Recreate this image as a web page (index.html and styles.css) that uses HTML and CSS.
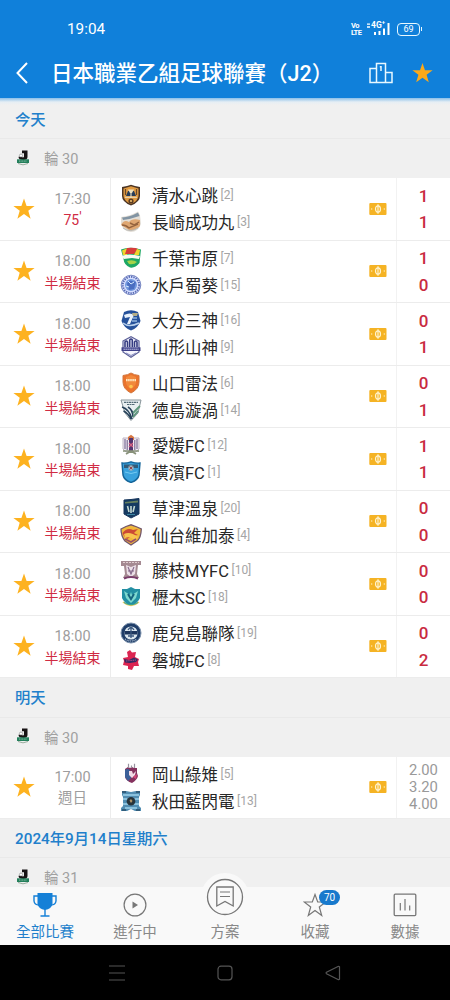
FILE: index.html
```html
<!doctype html>
<html lang="zh-Hant">
  <head>
    <meta charset="UTF-8" />
    <meta name="viewport" content="width=device-width, initial-scale=1.0" />
    <title>日本職業乙組足球聯賽（J2）</title>
    <link rel="stylesheet" href="styles.css">
  </head>
  <body>
    <!-- Shared icons -->
    <svg class="sprite" aria-hidden="true">
      <symbol id="star" viewBox="0 0 22 22">
        <path d="M11 .4 13.6 8H21.6L15.3 12.8 17.6 20.7 11 16 4.4 20.7 6.7 12.8.4 8H8.4Z" />
      </symbol>
      <symbol id="cash" viewBox="0 0 18 12">
        <rect x="0.3" width="17.2" height="12" rx="1" fill="#f5b324" />
        <ellipse cx="9" cy="6" rx="2.5" ry="3.2" fill="none" stroke="#fff3cf" stroke-width="1.2" />
        <path d="M9 1.3v9.4M2 6h1.3M14.7 6H16" stroke="#fff3cf" stroke-width="1.2" />
      </symbol>
      <symbol id="jleague" viewBox="0 0 14 16">
        <path d="M6 .5H11.5V7Q11.5 10 7.5 10 2.5 10 2.5 6.8H5.5Q7.5 8.5 8 6.5V3.2H6Z" fill="#171314" />
        <circle cx="5" cy="5.6" r="1.6" fill="#fff" stroke="#444" stroke-width=".4" />
        <path d="M1 9.3H13V13H1Z" fill="#24805c" />
        <path d="M3 11.1H11" stroke="#a6cdb9" stroke-width=".8" stroke-dasharray="1 .6" />
        <path d="M2 13.5Q7 16.2 12 13.5" stroke="#9aae9f" fill="none" />
      </symbol>
    </svg>

    <div class="screen">
      <div class="status-bar">
        <span class="clock">19:04</span>
        <span class="volte">Vo<br>LTE</span>
        <span class="signal">
          <span class="signal-type">4G<sup>+</sup></span>
          <svg width="24" height="14" viewBox="0 0 24 14">
            <path d="M1 2.2H4M1 5H4" stroke="#fff" stroke-width="1.3" />
            <path d="M9 10v3M13.5 9v4M18 6.5V13M22.5 1v12" stroke="#fff" stroke-width="2" />
          </svg>
        </span>
        <span class="battery">69</span>
      </div>

      <div class="header">
        <svg class="back" width="14" height="24" viewBox="0 0 14 24">
          <path d="M12 2 2.5 12 12 22" fill="none" stroke="#fff" stroke-width="2" />
        </svg>
        <h1>日本職業乙組足球聯賽（J2）</h1>
        <svg class="podium" width="24" height="22" viewBox="0 0 24 22">
          <path d="M7.5 20.5V1.5H16.5V20.5M7.5 6.5H1V20.5H23V10.5H16.5M10.8 4.8H12V9" fill="none" stroke="#e8f8ff" stroke-width="1.5" />
        </svg>
        <svg class="header-star"><use href="#star" /></svg>
      </div>

      <div class="list">
        <h2 class="day">今天</h2>
        <div class="round"><svg class="league"><use href="#jleague" /></svg>輪 30</div>

        <div class="match">
          <svg class="fav"><use href="#star" /></svg>
          <div class="when"><span>17:30</span><span class="live">75<i>'</i></span></div>
          <div class="teams">
            <div class="team">
              <svg class="crest" viewBox="0 0 22 22">
                <path d="M2 3 7 2 11 .8 15 2 20 3V12Q20 18 11 21.5 2 18 2 12Z" fill="#4b3424" />
                <path d="M3.5 4.5 11 2.3 18.5 4.5V12Q18 17 11 20 4 17 3.5 12Z" fill="#e09a41" />
                <path d="M6 12 8 7H14L16 12Z" fill="#273d59" />
                <path d="M8 5.5H14L12 9H10Z" fill="#efe2bf" />
                <path d="M5 13.2H17M11 9V14" stroke="#eee3c6" stroke-width="1.1" />
                <path d="M5.5 5V11M16.5 5V11" stroke="#6b4a2b" stroke-width="1.2" />
                <circle cx="11" cy="17" r="2.6" fill="#5a3b21" />
                <circle cx="11" cy="17" r="1.1" fill="#e9bb6d" />
              </svg>
              清水心跳<small>[2]</small>
            </div>
            <div class="team">
              <svg class="crest" viewBox="0 0 22 22">
                <path d="M1 6Q10 5 18 .5L20 4 21 13Q18 21 11 21 3 20 1 13Z" fill="#e3ded6" />
                <path d="M2 6.5Q10 6 18 1.5L19.5 5Q11 8 3 9Z" fill="#8294a3" />
                <path d="M1 14Q4 8 9 11 12 7 20 9L20 15Q16 20 9 19Z" fill="#dfa772" />
                <path d="M2 14Q6 14 9 17L18 13M10 12 14 14 19 11" stroke="#96643f" fill="none" stroke-width="1.4" />
                <path d="M3 17Q10 22 18 17" fill="none" stroke="#b9b9b5" />
              </svg>
              長崎成功丸<small>[3]</small>
            </div>
          </div>
          <svg class="cash"><use href="#cash" /></svg>
          <div class="score"><b>1</b><b>1</b></div>
        </div>

        <div class="match">
          <svg class="fav"><use href="#star" /></svg>
          <div class="when"><span>18:00</span><span class="live">半場結束</span></div>
          <div class="teams">
            <div class="team">
              <svg class="crest" viewBox="0 0 22 22">
                <path d="M1 2.5Q10-1 21 2.5L19.5 16Q15 21.5 10 20.5 4 18 3.5 12Z" fill="#1da765" />
                <path d="M2 3.5Q6 1 10 1L7 8 3 8Z" fill="#f0d22d" />
                <path d="M7 1Q15 0 18 2L14 7 5 7Z" fill="#d73c3b" />
                <path d="M17 2 20 3 19 8H14Z" fill="#efd42c" />
                <path d="M1 9Q9 6 20 9L19 12 12 11 4 12Z" fill="#f8faf1" />
                <path d="M7 14Q13 12 17 15 14 18 9 17Z" fill="#a6d349" />
              </svg>
              千葉市原<small>[7]</small>
            </div>
            <div class="team">
              <svg class="crest" viewBox="0 0 22 22">
                <circle cx="11" cy="11" r="9.8" fill="#d8e0ff" stroke="#7c8bc4" stroke-width="1" />
                <circle cx="11" cy="11" r="8.2" fill="none" stroke="#5a6cb4" stroke-width="2" stroke-dasharray="1.4 1" />
                <circle cx="11" cy="11" r="6" fill="#7399df" />
                <path d="M7 10Q9 5 12 7L16 8 14 15 9 16Z" fill="#4a6ec2" />
                <path d="M8 7 11 10 14 8M6 12 9 13" stroke="#d6ebff" fill="none" />
              </svg>
              水戶蜀葵<small>[15]</small>
            </div>
          </div>
          <svg class="cash"><use href="#cash" /></svg>
          <div class="score"><b>1</b><b>0</b></div>
        </div>

        <div class="match">
          <svg class="fav"><use href="#star" /></svg>
          <div class="when"><span>18:00</span><span class="live">半場結束</span></div>
          <div class="teams">
            <div class="team">
              <svg class="crest" viewBox="0 0 22 22">
                <path d="M4 3Q11-.5 18 3L20.5 12Q18 19 11 21.5 4 19 1.5 12Z" fill="#25519a" />
                <path d="M4 6Q10 3 14 6L10 15H7L10 8 5 9Z" fill="#e9f2fb" />
                <path d="M12 4H18L17 7H13Z" fill="#b5ae85" />
                <path d="M13 9H17M12 12H17" stroke="#8fb2dd" stroke-width="1.3" />
                <path d="M3 14Q9 19 19 14" stroke="#b8d0eb" stroke-width="1.6" fill="none" />
              </svg>
              大分三神<small>[16]</small>
            </div>
            <div class="team">
              <svg class="crest" viewBox="0 0 22 22">
                <path d="M3 5 11 .8 19 5V16L11 21.3 3 16Z" fill="#f5f5fe" stroke="#5c6098" stroke-width="1.2" />
                <path d="M5 11V6Q6.5 4 7.5 6V11M9.7 11V4Q11 2 12.3 4V11M14.5 11V6Q16 4 17 6V11" fill="none" stroke="#353b81" stroke-width="1.6" />
                <path d="M1.5 11.3H20.5V15H1.5Z" fill="#3e4089" />
                <path d="M3.5 13.2H18.5" stroke="#dfdffa" stroke-dasharray="1.3 .7" />
                <path d="M6 17 11 19.5 16 17" stroke="#8087bb" fill="none" />
              </svg>
              山形山神<small>[9]</small>
            </div>
          </div>
          <svg class="cash"><use href="#cash" /></svg>
          <div class="score"><b>0</b><b>1</b></div>
        </div>

        <div class="match">
          <svg class="fav"><use href="#star" /></svg>
          <div class="when"><span>18:00</span><span class="live">半場結束</span></div>
          <div class="teams">
            <div class="team">
              <svg class="crest" viewBox="0 0 22 22">
                <path d="M3 3.5Q8 3 11 1 14 3 19 3.5V10Q19 17 11 21 3 17 3 10Z" fill="#eb732c" stroke="#d1763d" />
                <path d="M6 5 11 3 16 5V11Q15 15 11 17 7 15 6 11Z" fill="#f1893c" />
                <path d="M6 8.2H16" stroke="#ffe5bd" stroke-width="2.2" stroke-dasharray="1.6 .5" />
                <circle cx="11" cy="14.5" r="1.8" fill="#ffc54f" />
              </svg>
              山口雷法<small>[6]</small>
            </div>
            <div class="team">
              <svg class="crest" viewBox="0 0 22 22">
                <path d="M1 1H21L18 14 11 21.5 5 14Z" fill="#e7eef0" stroke="#88959b" />
                <path d="M4 3.3H18M7 5.5H15" stroke="#526a77" stroke-width="1.2" stroke-dasharray="2 .5" />
                <path d="M2 8Q9 10 12 20M3.5 12Q8 14 11 20M8 8Q13 11 13 18" fill="none" stroke="#27425a" stroke-width="1.6" />
                <path d="M13 14 20 7M13 18 18 12" stroke="#5d967a" stroke-width="1.8" />
              </svg>
              德島漩渦<small>[14]</small>
            </div>
          </div>
          <svg class="cash"><use href="#cash" /></svg>
          <div class="score"><b>0</b><b>1</b></div>
        </div>

        <div class="match">
          <svg class="fav"><use href="#star" /></svg>
          <div class="when"><span>18:00</span><span class="live">半場結束</span></div>
          <div class="teams">
            <div class="team">
              <svg class="crest" viewBox="0 0 22 22">
                <path d="M3 4H19V15L16 18H6L3 15Z" fill="#eee8f3" stroke="#bdb5c4" />
                <path d="M8 3 11 .7 14 3V6H8Z" fill="#d77743" />
                <path d="M9 4H13V17H9Z" fill="#52346f" />
                <path d="M5 5V15M17 5V15M7.2 6V16M14.8 6V16" stroke="#71628b" stroke-width="1.1" />
                <path d="M9 9 13 13M13 9 9 13" stroke="#d56384" stroke-width="1.3" />
                <path d="M3 17H19M6 20 11 17 16 20" stroke="#88927a" stroke-width="1.7" fill="none" />
              </svg>
              愛媛FC<small>[12]</small>
            </div>
            <div class="team">
              <svg class="crest" viewBox="0 0 22 22">
                <path d="M2 2Q6 2.5 11 .8 16 2.5 20 2L19 14Q18 19 11 21.5 4 19 3 14Z" fill="#39a2dd" stroke="#14659a" stroke-width="1.4" />
                <path d="M4 3.5H18V7H4Z" fill="#315c7a" />
                <circle cx="11" cy="7" r="2.7" fill="#9fb4c0" />
                <path d="M9.5 5.5 12.5 8.5M12.5 5.5 9.5 8.5" stroke="#94484f" />
                <path d="M5 11Q11 14 17 11" fill="none" stroke="#74caf2" />
              </svg>
              橫濱FC<small>[1]</small>
            </div>
          </div>
          <svg class="cash"><use href="#cash" /></svg>
          <div class="score"><b>1</b><b>1</b></div>
        </div>

        <div class="match">
          <svg class="fav"><use href="#star" /></svg>
          <div class="when"><span>18:00</span><span class="live">半場結束</span></div>
          <div class="teams">
            <div class="team">
              <svg class="crest" viewBox="0 0 22 22">
                <path d="M4 3 11 2.5 19 1.5V17L11 21 4 17Z" fill="#153a61" stroke="#16355c" />
                <path d="M5 5 18 3.5V5.5L5 6.5Z" fill="#66805f" />
                <path d="M7.5 9 9 15M11 9V16M14.5 9 13 15" fill="none" stroke="#c4d9d2" stroke-width="1.6" />
                <path d="M7 17.5H15" stroke="#3b83a1" />
              </svg>
              草津溫泉<small>[20]</small>
            </div>
            <div class="team">
              <svg class="crest" viewBox="0 0 22 22">
                <path d="M1 5 6 2.5 11 .8 17 3 21.3 5Q21 14 17 17L11 21 5 17Q1 12 1 5Z" fill="#f0b83b" stroke="#72566b" stroke-width="1.3" />
                <path d="M2.5 9Q7 3 13 6L18 5 14 9 18 11 12 12 7 15 4 12Z" fill="#cb4935" />
                <path d="M4 10Q10 7 18 13L15 16Q10 12 5 14Z" fill="#f8c450" />
                <path d="M5 15 11 18 16 15" fill="none" stroke="#974e68" stroke-width="1.6" />
              </svg>
              仙台維加泰<small>[4]</small>
            </div>
          </div>
          <svg class="cash"><use href="#cash" /></svg>
          <div class="score"><b>0</b><b>0</b></div>
        </div>

        <div class="match">
          <svg class="fav"><use href="#star" /></svg>
          <div class="when"><span>18:00</span><span class="live">半場結束</span></div>
          <div class="teams">
            <div class="team">
              <svg class="crest" viewBox="0 0 22 22">
                <path d="M1 2H21V6H18L17 15 19 19H3L5 15 4 7H1Z" fill="#a58a92" />
                <path d="M3 3.5H19" stroke="#e0cdd0" stroke-width="1.2" stroke-dasharray="2 1" />
                <path d="M6 6 11 8 16 6 15 15 11 18 7 15Z" fill="#ece0e8" />
                <path d="M8 8 11 15 14 8M8 12H14" fill="none" stroke="#85688a" stroke-width="1.1" />
                <path d="M4 19.5Q11 16.5 18 19.5" stroke="#793d6b" stroke-width="2" fill="none" />
              </svg>
              藤枝MYFC<small>[10]</small>
            </div>
            <div class="team">
              <svg class="crest" viewBox="0 0 22 22">
                <path d="M2 3 7 3 11 1 15 3 20 3V12Q18 17 11 20 4 17 2 12Z" fill="#238fa3" />
                <path d="M4 5 10 9 11 6 12 9 18 5 16 12 11 17 6 12Z" fill="#7ed9cf" />
                <path d="M8 8 11 13 14 8" stroke="#16647f" stroke-width="2" fill="none" />
                <path d="M3 16Q11 23 19 16" fill="none" stroke="#e3ca62" stroke-width="1.6" />
                <path d="M4 16.5Q11 21 18 16.5" fill="none" stroke="#36a391" />
              </svg>
              櫪木SC<small>[18]</small>
            </div>
          </div>
          <svg class="cash"><use href="#cash" /></svg>
          <div class="score"><b>0</b><b>0</b></div>
        </div>

        <div class="match">
          <svg class="fav"><use href="#star" /></svg>
          <div class="when"><span>18:00</span><span class="live">半場結束</span></div>
          <div class="teams">
            <div class="team">
              <svg class="crest" viewBox="0 0 22 22">
                <circle cx="11" cy="11" r="10" fill="#203e69" stroke="#7b91ac" />
                <circle cx="11" cy="11" r="6.6" fill="#dce7ee" />
                <path d="M4.5 9H17.5V12.5H4.5Z" fill="#1d365d" />
                <path d="M8 8Q11 3 14 8M11 6V16M8 14H14" fill="none" stroke="#38567d" stroke-width="1.3" />
                <path d="M5 17Q11 21 17 17" fill="none" stroke="#b8c7da" stroke-width="1.2" stroke-dasharray="1 .8" />
              </svg>
              鹿兒島聯隊<small>[19]</small>
            </div>
            <div class="team">
              <svg class="crest" viewBox="0 0 22 22">
                <path d="M7 3 10 1 12 3.5 16 3 15 8 19 10 18 13 19 17 14 17 12 21 8 20 8 17 3 16 4 12 3 9 8 8Z" fill="#dc2451" />
                <path d="M4 10 9 11 14 8.5 18 10.5 16 13 10 14 5 13.5Z" fill="#342b65" />
                <path d="M6 12 16 11" stroke="#a95083" stroke-width="1" stroke-dasharray="1.5 .7" />
              </svg>
              磐城FC<small>[8]</small>
            </div>
          </div>
          <svg class="cash"><use href="#cash" /></svg>
          <div class="score"><b>0</b><b>2</b></div>
        </div>

        <h2 class="day">明天</h2>
        <div class="round"><svg class="league"><use href="#jleague" /></svg>輪 30</div>

        <div class="match upcoming">
          <svg class="fav"><use href="#star" /></svg>
          <div class="when"><span>17:00</span><span>週日</span></div>
          <div class="teams">
            <div class="team">
              <svg class="crest" viewBox="0 0 22 22">
                <path d="M5 6 8 4 10 5 12 4 14 5 17 5 17 10 18 13Q17 17 12 20 6 18 5 14Z" fill="#85325e" />
                <path d="M5 7Q7 5 10 7L11 15 8 18 5 14Z" fill="#3b6099" />
                <path d="M9 8H12L13 11 16 8 15 12 12 15 9 12Z" fill="#f2dbe6" />
                <path d="M8.5 .8V5M14.5 .8V5M11.5 2.5V5" stroke="#98939f" stroke-width="1.2" />
                <path d="M13 14 17 11 16 16Z" fill="#d54779" />
              </svg>
              岡山綠雉<small>[5]</small>
            </div>
            <div class="team">
              <svg class="crest" viewBox="0 0 22 22">
                <path d="M2 1H6L11 2 16 1H20V5L19 7V16L21 18V21H15L11 19 7 21H1V18L3 16V7L2 5Z" fill="#518db2" />
                <path d="M3 5H19M3 9H19M3 14H19M5 18H17" stroke="#9dd2ec" stroke-width="1.4" />
                <circle cx="11" cy="11.2" r="4.3" fill="#27343c" />
                <path d="M9.5 10.5 11 9 12.5 11 11 13Z" fill="#b39569" />
                <path d="M2 2H6M20 2H16M2 20H6M20 20H16" stroke="#284e6a" stroke-width="1.5" />
              </svg>
              秋田藍閃電<small>[13]</small>
            </div>
          </div>
          <svg class="cash"><use href="#cash" /></svg>
          <div class="odds"><span>2.00</span><span>3.20</span><span>4.00</span></div>
        </div>

        <h2 class="day">2024年9月14日星期六</h2>
        <div class="round"><svg class="league"><use href="#jleague" /></svg>輪 31</div>
      </div>

      <div class="tabs">
        <div class="tab active">
          <svg width="24" height="26" viewBox="0 0 24 26">
            <path d="M4.5 1H19.5V12Q18.5 17 12 18 5.5 17 4.5 12Z" fill="#1580d7" />
            <path d="M5 4H1V9Q1.5 13 6 13M19 4H23V9Q22.5 13 18 13M12 17V23.5M7.5 24H16.5" fill="none" stroke="#1580d7" stroke-width="1.4" />
          </svg>
          <span>全部比賽</span>
        </div>
        <div class="tab">
          <svg width="24" height="26" viewBox="0 0 24 26">
            <circle cx="12" cy="13" r="10.9" fill="none" stroke="#777" stroke-width="1.2" />
            <path d="M9.5 9.5 15 13 9.5 16.5Z" fill="#777" />
          </svg>
          <span>進行中</span>
        </div>
        <div class="tab tab-plan">
          <svg width="48" height="48" viewBox="0 0 48 48">
            <circle cx="24" cy="24" r="24" fill="#f9f9f9" />
            <circle cx="24" cy="24" r="17.5" fill="none" stroke="#777" stroke-width="1.3" />
            <path d="M15.8 14H32.2V33L24 28.5 15.8 33Z" fill="none" stroke="#777" stroke-width="1.3" />
            <path d="M19 19H29M19 23.5H29" stroke="#777" stroke-width="1.2" />
          </svg>
          <span>方案</span>
        </div>
        <div class="tab">
          <svg width="24" height="26" viewBox="0 0 24 26">
            <path d="M12 2.5 14.7 10H22.8L16.3 15 18.7 23.5 12 18.6 5.3 23.5 7.7 15 1.2 10H9.3Z" fill="none" stroke="#777" stroke-width="1.2" />
          </svg>
          <span>收藏</span>
          <em class="badge">70</em>
        </div>
        <div class="tab">
          <svg width="24" height="26" viewBox="0 0 24 26">
            <rect x="1.2" y="2.2" width="21.6" height="21.4" rx="1" fill="none" stroke="#777" stroke-width="1.3" />
            <path d="M7.3 11V18.5M12 7V18.5M16.7 13.5V18.5" stroke="#777" stroke-width="1.2" />
          </svg>
          <span>數據</span>
        </div>
      </div>

      <div class="system-nav">
        <svg width="16" height="16" viewBox="0 0 16 16"><path d="M0 1H16M0 8H16M0 15H16" stroke="#555" stroke-width="1.2" /></svg>
        <svg width="16" height="16" viewBox="0 0 16 16"><rect x="1" y="1.2" width="14" height="13.6" rx="3" fill="none" stroke="#555" stroke-width="1.2" /></svg>
        <svg width="16" height="16" viewBox="0 0 16 16"><path d="M14.5 1.8V14.2Q14 15 13 14.5L1.5 8.7Q.7 8 1.5 7.3L13 1.5Q14 1 14.5 1.8Z" fill="none" stroke="#555" stroke-width="1.2" /></svg>
      </div>
    </div>
  </body>
</html>
```

FILE: styles.css
```css
* {
  margin: 0;
  padding: 0;
  box-sizing: border-box;
}

body {
  font-family: Roboto, "Noto Sans CJK TC", sans-serif;
  background: #f0f0f0;
}

svg {
  display: block;
  flex: none;
}

.sprite {
  width: 0;
  height: 0;
  position: absolute;
}

.screen {
  width: 450px;
  height: 1000px;
  display: flex;
  flex-direction: column;
  overflow: hidden;
}

.status-bar {
  height: 48px;
  padding: 10px 30px 0 67px;
  display: flex;
  align-items: center;
  flex: none;
  background: #1080da;
  color: #fff;
}

.clock {
  flex: 1;
  font-size: 15.3px;
}

.volte {
  width: 11px;
  margin-right: 4px;
  font-size: 7.5px;
  line-height: 7px;
  font-weight: 700;
  letter-spacing: -0.6px;
}

.signal {
  position: relative;
  margin-right: 7px;
}

.signal-type {
  position: absolute;
  top: -2px;
  left: 5px;
  font-size: 8.5px;
  line-height: 10px;
  font-weight: 700;
  white-space: nowrap;
}

.signal-type sup {
  font-size: 6px;
  line-height: 0;
}

.battery {
  position: relative;
  width: 23px;
  height: 13px;
  border: 1.5px solid #e8f8ff;
  border-radius: 4px;
  font-size: 9px;
  line-height: 11px;
  text-align: center;
}

.battery::after {
  content: "";
  position: absolute;
  top: 3px;
  right: -3px;
  width: 1.5px;
  height: 4px;
  background: #e8f8ff;
}

.header {
  height: 50px;
  padding: 0 17px 0 15px;
  display: flex;
  align-items: center;
  flex: none;
  background: #1080da;
  color: #fff;
}

.header h1 {
  flex: 1;
  margin-left: 22px;
  padding-top: 1px;
  font-size: 21.5px;
  line-height: 30px;
  font-weight: 500;
  white-space: nowrap;
}

.podium {
  margin-right: 19px;
}

.header-star {
  width: 21px;
  height: 22px;
  fill: #fca918;
}

.list {
  flex: 1;
  min-height: 0;
  padding-top: 1.5px;
  overflow: hidden;
  background: linear-gradient(#8abfe9, #e6eef4 4px, #f0f0f0 7px);
}

.day {
  height: 39.5px;
  padding-left: 15px;
  border-bottom: 1px solid #e9e9e9;
  font-size: 15.3px;
  line-height: 41px;
  font-weight: 500;
  color: #217fcb;
}

.round {
  height: 39px;
  padding: 0 0 2px 16px;
  display: flex;
  align-items: center;
  font-size: 14.5px;
  color: #a0a0a0;
}

.league {
  width: 14px;
  height: 16px;
  margin-right: 14px;
}

.match {
  height: 62.5px;
  display: flex;
  align-items: center;
  background: #fff;
  border-bottom: 1px solid #ececec;
}

.upcoming {
  height: 62px;
}

.fav {
  width: 22px;
  height: 22px;
  margin-left: 13px;
  fill: #fdb220;
}

.when {
  width: 75px;
  padding-top: 3px;
  display: flex;
  flex-direction: column;
  align-items: center;
  font-size: 14.5px;
  line-height: 20.5px;
  color: #9d9d9d;
}

.live {
  font-size: 14px;
  color: #d02b43;
}

.live i {
  font-style: normal;
  vertical-align: 3px;
  line-height: 0;
}

.teams {
  width: 259px;
  height: 100%;
  padding: 4px 0 0 9px;
  border-left: 1px solid #ececec;
}

.team {
  height: 26.7px;
  display: flex;
  align-items: center;
  font-size: 16.5px;
  color: #272727;
  white-space: nowrap;
}

.crest {
  width: 22px;
  height: 22px;
  margin-right: 10px;
}

.team small {
  padding-left: 2.5px;
  font-size: 12px;
  color: #a5a5a5;
}

.cash {
  width: 18px;
  height: 12px;
  margin-right: 9px;
}

.score,
.odds {
  flex: 1;
  height: 100%;
  display: flex;
  flex-direction: column;
  align-items: center;
  justify-content: center;
  border-left: 1px solid #f2f2f2;
}

.score {
  padding-top: 1px;
}

.score b {
  font-size: 17px;
  line-height: 26.7px;
  font-weight: 500;
  color: #c92b3f;
}

.odds span {
  font-size: 14.8px;
  line-height: 17px;
  color: #999;
}

.tabs {
  height: 58px;
  display: flex;
  flex: none;
  background: #f9f9f9;
}

.tab {
  position: relative;
  flex: 1;
  padding-top: 5px;
  display: flex;
  flex-direction: column;
  align-items: center;
  font-size: 14.5px;
  line-height: 29px;
  color: #888;
}

.active {
  color: #217fcb;
}

.tab-plan svg {
  margin: -19px 0 -3px;
}

.badge {
  position: absolute;
  top: 3px;
  left: 49px;
  width: 21px;
  height: 15px;
  border-radius: 8px;
  background: #1879cc;
  color: #fff;
  font-size: 10px;
  line-height: 15px;
  font-style: normal;
  text-align: center;
}

.system-nav {
  height: 55px;
  display: flex;
  align-items: center;
  justify-content: center;
  gap: 92px;
  flex: none;
  background: #000;
}
```
